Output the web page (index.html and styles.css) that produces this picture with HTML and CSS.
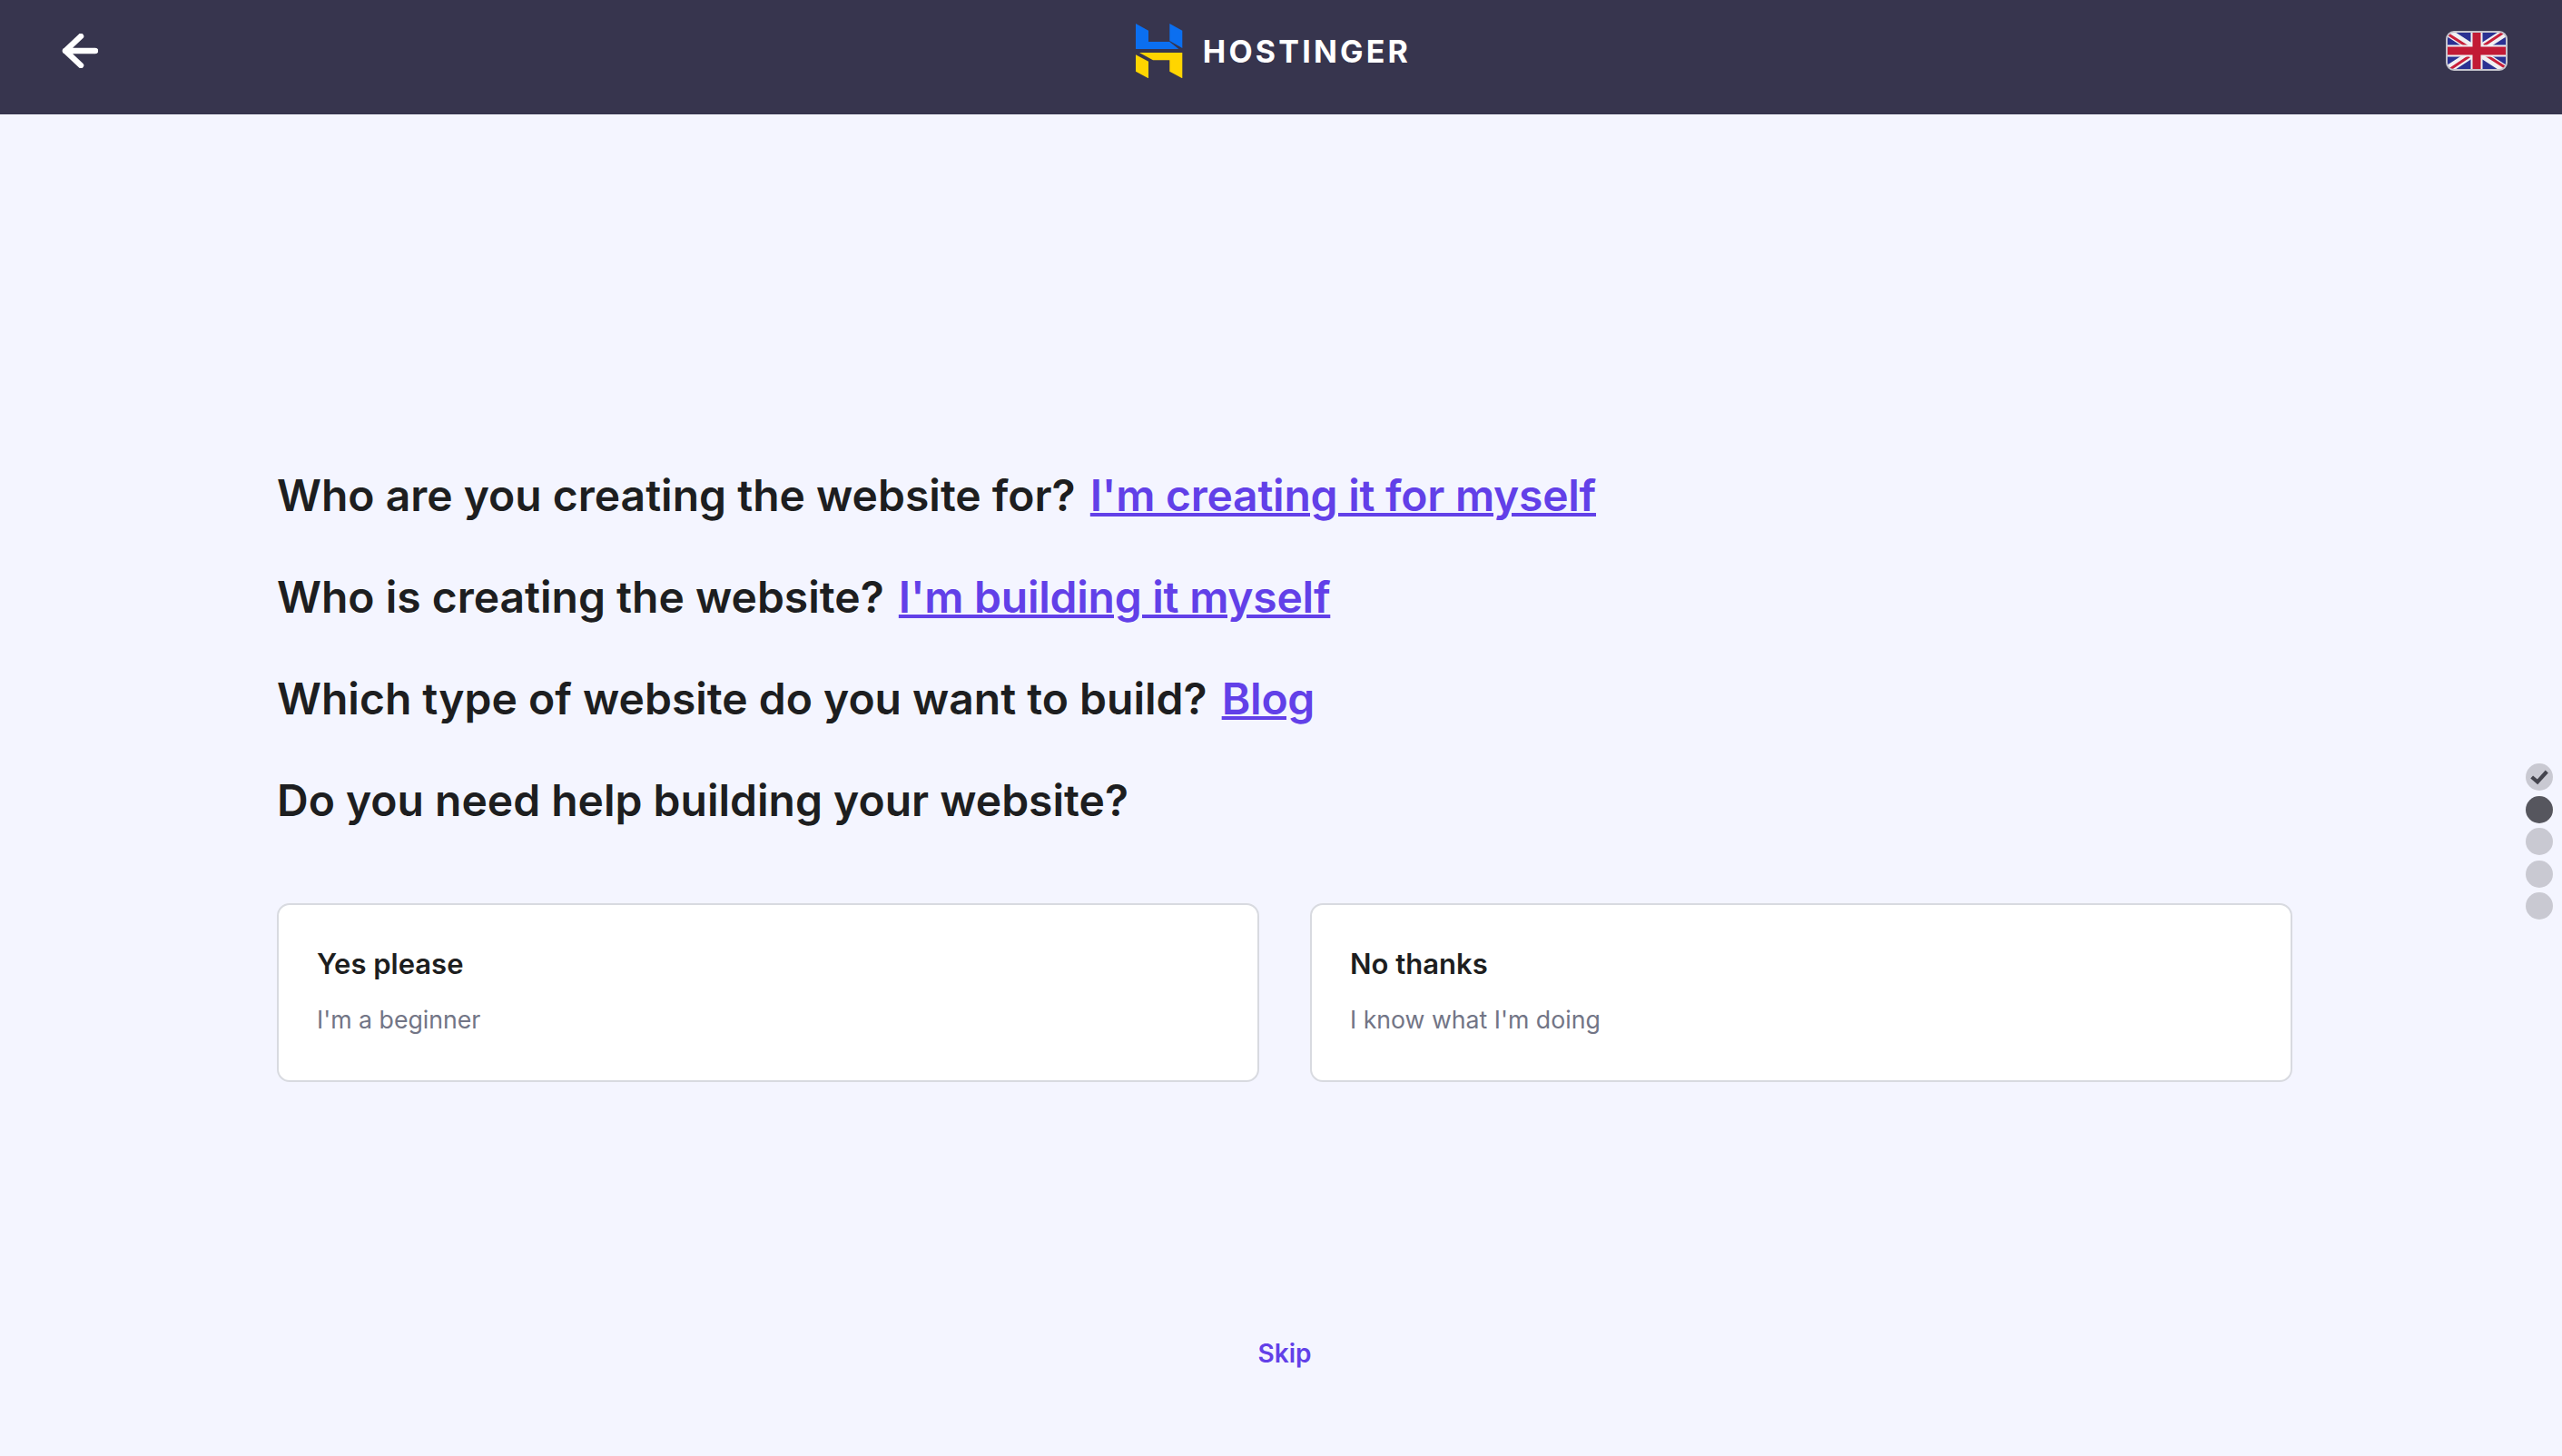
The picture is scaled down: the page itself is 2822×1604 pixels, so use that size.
FILE: index.html
```html
<!DOCTYPE html>
<html lang="en">
<head>
  <meta charset="UTF-8" />
  <title>Hostinger — Onboarding</title>
  <link rel="stylesheet" href="styles.css">
</head>
<body>
  <header class="top-bar">
    <a class="back-link" href="#" aria-label="Back">
      <svg viewBox="0 0 40 38" width="40" height="38">
        <path d="M21 3 L4 19 L21 35 M4 19 H37" fill="none" stroke="#fff" stroke-width="6.5" stroke-linecap="round" stroke-linejoin="round" />
      </svg>
    </a>
    <div class="brand">
      <svg class="brand-mark" viewBox="0 0 52 60" width="52" height="60">
        <polygon fill="#0b6ff0" points="0,0 14,7.7 14,20 37.3,20 47.3,28 0,28" />
        <polygon fill="#0b6ff0" points="37.3,0 51.3,7.7 51.3,27 37.3,19" />
        <polygon fill="#ffd500" points="4,32 51.3,32 51.3,60.3 37.3,52.7 37.3,40.3 19,40.3" />
        <polygon fill="#ffd500" points="0,34.3 14,41.7 14,60.3 0,52.7" />
      </svg>
      <span class="brand-name">HOSTINGER</span>
    </div>
    <div class="lang">
      <svg viewBox="0 0 68 44" width="68" height="44">
        <defs><clipPath id="flagClip"><rect x="1" y="1" width="66" height="42" rx="8" /></clipPath></defs>
        <g clip-path="url(#flagClip)">
          <rect width="68" height="44" fill="#2b3192" />
          <path d="M0 0 L68 44 M68 0 L0 44" stroke="#f0f0f2" stroke-width="9" />
          <path d="M0 2 L28 20 M68 42 L40 24 M66 0 L42 16 M2 44 L26 28" stroke="#c8203a" stroke-width="3" />
          <path d="M34 0 V44 M0 22 H68" stroke="#f0f0f2" stroke-width="13" />
          <path d="M34 0 V44 M0 22 H68" stroke="#c21b36" stroke-width="9" />
        </g>
        <rect x="1" y="1" width="66" height="42" rx="8" fill="none" stroke="#c4c4cc" stroke-width="2" />
      </svg>
    </div>
  </header>

  <main class="survey">
    <div class="question">Who are you creating the website for? <a href="#">I'm creating it for myself</a></div>
    <div class="question">Who is creating the website? <a href="#">I'm building it myself</a></div>
    <div class="question">Which type of website do you want to build? <a href="#">Blog</a></div>
    <div class="question">Do you need help building your website?</div>

    <div class="options">
      <div class="option">
        <div class="option-title">Yes please</div>
        <div class="option-sub">I'm a beginner</div>
      </div>
      <div class="option">
        <div class="option-title">No thanks</div>
        <div class="option-sub">I know what I'm doing</div>
      </div>
    </div>

    <a class="skip" href="#">Skip</a>
  </main>

  <div class="steps">
    <span class="step done">
      <svg viewBox="0 0 30 30" width="30" height="30">
        <path d="M6.7 15 L13 20.3 L23.3 9" fill="none" stroke="#45454e" stroke-width="4.2" />
      </svg>
    </span>
    <span class="step current"></span>
    <span class="step"></span>
    <span class="step"></span>
    <span class="step"></span>
  </div>
</body>
</html>
```

FILE: styles.css
```css
:root {
  --link: #6240e8;
  --text: #1d1e20;
}

* {
  box-sizing: border-box;
}

html,
body {
  height: 100%;
}

body {
  margin: 0;
  font-family: "Inter", "Open Sans", sans-serif;
  color: var(--text);
  background: #f4f5ff;
  overflow: hidden;
}

.top-bar {
  height: 126px;
  padding: 0 60px 14px 68px;
  background: #37354e;
  display: grid;
  grid-template-columns: 1fr auto 1fr;
  align-items: center;
}

.back-link {
  display: flex;
}

.brand {
  display: flex;
  align-items: center;
  gap: 22px;
  margin-right: 25px;
}

.brand-name {
  font-size: 34px;
  font-weight: 700;
  letter-spacing: 3.2px;
  color: #fff;
}

.lang {
  display: flex;
  justify-content: flex-end;
}

.survey {
  padding: 388px 297px 0 305px;
}

.question {
  font-size: 48px;
  font-weight: 600;
  line-height: 64px;
  margin-bottom: 48px;
}

.question a {
  color: var(--link);
  margin-left: 4px;
  letter-spacing: -0.25px;
  text-decoration-thickness: 4px;
}

.options {
  display: flex;
  gap: 56px;
  margin-top: 81px;
}

.option {
  flex: 1;
  height: 197px;
  padding: 45px 42px 0;
  background: #fff;
  border: 2px solid #d8dae0;
  border-radius: 14px;
}

.option-title {
  font-size: 31px;
  font-weight: 600;
  line-height: 40px;
}

.option-sub {
  margin-top: 21px;
  font-size: 26.7px;
  line-height: 40px;
  color: #727586;
}

.skip {
  display: block;
  margin-top: 282px;
  text-align: center;
  font-size: 28px;
  font-weight: 600;
  color: var(--link);
  text-decoration: none;
}

.steps {
  position: fixed;
  right: 10px;
  top: 841px;
  display: flex;
  flex-direction: column;
  gap: 5.5px;
}

.step {
  width: 30px;
  height: 30px;
  border-radius: 50%;
  background: #c9c9d2;
  display: flex;
}

.step.current {
  background: #56565e;
}
```
